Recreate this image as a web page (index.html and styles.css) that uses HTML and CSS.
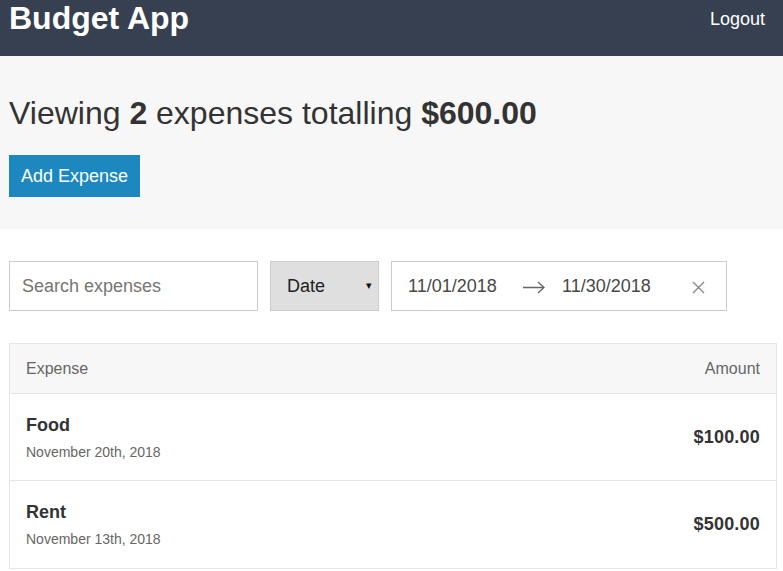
FILE: index.html
```html
<!DOCTYPE html>
<html>
<head>
<meta charset="utf-8">
<link rel="stylesheet" href="styles.css">
</head>
<body>
<header class="header">
  <div class="container header-content">
    <a class="header-title" href="#"><h1>Budget App</h1></a>
    <button class="logout">Logout</button>
  </div>
</header>
<section class="summary">
  <div class="container">
    <h1 class="summary-title">Viewing <strong>2</strong> expenses totalling <strong>$600.00</strong></h1>
    <a class="button" href="#">Add Expense</a>
  </div>
</section>
<div class="container filters">
  <input class="search" type="text" placeholder="Search expenses">
  <div class="select"><span>Date</span><span class="caret">&#9662;</span></div>
  <div class="daterange">
    <div class="date-input">11/01/2018</div>
    <svg class="arrow" width="24" height="24" viewBox="0 0 24 24"><path d="M1 12.5h21M16 7l6 5.5-6 5.5" fill="none" stroke="#666" stroke-width="1.3"/></svg>
    <div class="date-input">11/30/2018</div>
    <button class="clear"><svg width="13" height="13" viewBox="0 0 13 13"><path d="M1 1l11 11M12 1L1 12" stroke="#888" stroke-width="1.4"/></svg></button>
  </div>
</div>
<div class="container">
  <div class="list">
    <div class="list-header"><span>Expense</span><span>Amount</span></div>
    <a class="list-item" href="#">
      <div>
        <h3 class="item-title">Food</h3>
        <span class="item-sub">November 20th, 2018</span>
      </div>
      <h3 class="item-data">$100.00</h3>
    </a>
    <a class="list-item" href="#">
      <div>
        <h3 class="item-title">Rent</h3>
        <span class="item-sub">November 13th, 2018</span>
      </div>
      <h3 class="item-data">$500.00</h3>
    </a>
  </div>
</div>
</body>
</html>
```
FILE: styles.css
```css
* { box-sizing: border-box; }
body {
  margin: 0;
  font-family: "Liberation Sans", Arial, sans-serif;
  font-size: 16px;
  line-height: 1.6;
  color: #333;
  background: #fff;
}
.container {
  margin: 0 6px 0 9px;
  width: 768px;
}
.header {
  background: #364051;
  height: 56px;
}
.header-content {
  display: flex;
  justify-content: space-between;
  align-items: flex-start;
}
.header-title {
  color: #fff;
  text-decoration: none;
}
.header-title h1 {
  margin: 0;
  font-size: 32px;
  line-height: 36px;
  font-weight: 700;
}
.logout {
  margin-top: 9px;
  background: none;
  border: none;
  color: #fff;
  font-family: inherit;
  font-size: 18px;
  line-height: 21px;
  padding: 0 12px;
}
.summary {
  background: #f7f7f7;
  padding: 32px 0;
}
.summary-title {
  margin: 0 0 16px;
  font-size: 32px;
  font-weight: 400;
  line-height: 1.6;
}
.summary-title strong { font-weight: 700; }
.button {
  display: inline-flex;
  align-items: center;
  height: 42px;
  padding: 0 12px;
  background: #1c88bf;
  color: #fff;
  font-size: 18px;
  text-decoration: none;
}
.filters {
  display: flex;
  gap: 12px;
  margin-top: 32px;
}
.search {
  width: 249px;
  height: 50px;
  border: 1px solid #cacccd;
  padding: 0 12px;
  font-family: inherit;
  font-size: 18px;
  color: #333;
  outline: none;
}
.search::placeholder { color: #757575; }
.select {
  width: 109px;
  height: 50px;
  background: #dfdfdf;
  border: 1px solid #cacccd;
  display: flex;
  align-items: center;
  justify-content: space-between;
  padding: 0 6px 0 16px;
  font-size: 18px;
  color: #222;
}
.caret {
  font-size: 11px;
  color: #111;
}
.daterange {
  width: 336px;
  height: 50px;
  border: 1px solid #cacccd;
  display: flex;
  align-items: center;
}
.date-input {
  width: 130px;
  padding-left: 16px;
  font-size: 18px;
  color: #484848;
}
.arrow { flex: none; margin-top: 2px; }
.clear {
  background: none;
  border: none;
  padding: 0 10px 0 16px;
  display: flex;
  align-items: center;
  margin-top: 2px;
}
.list {
  margin-top: 32px;
  border: 1px solid #e5e5e5;
}
.list-header {
  display: flex;
  justify-content: space-between;
  background: #f7f7f7;
  border-bottom: 1px solid #e5e5e5;
  padding: 12px 16px;
  color: #666;
  height: 50px;
}
.list-item {
  display: flex;
  justify-content: space-between;
  align-items: center;
  padding: 17px 16px;
  color: #333;
  text-decoration: none;
  border-bottom: 1px solid #e5e5e5;
}
.list-item:last-child { border-bottom: none; }
.item-title {
  margin: 0 0 1px;
  font-size: 18px;
  line-height: 1.6;
}
.item-sub {
  display: block;
  font-size: 14px;
  color: #666;
}
.item-data {
  margin: 0;
  font-size: 18px;
  letter-spacing: 0.2px;
}
```
